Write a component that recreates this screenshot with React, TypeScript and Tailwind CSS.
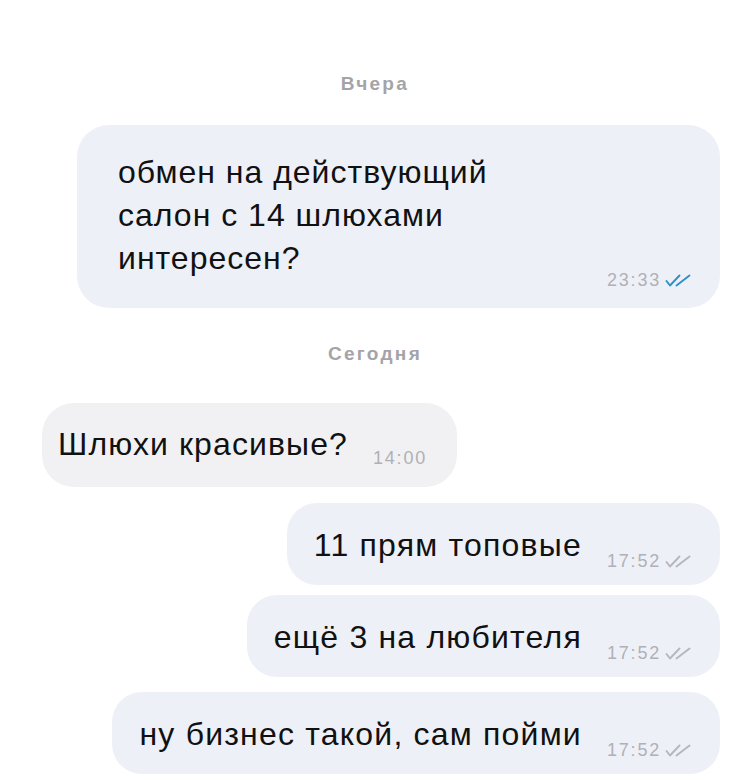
import React from "react";

type Msg = { text: string; time: string; read?: boolean; gap: string };

const font = { fontFamily: '"Liberation Sans", Arial, sans-serif' };

function Ticks({ read }: { read?: boolean }) {
  const color = read ? "#2f8fc9" : "#b6b6be";
  return (
    <svg width="27" height="13" viewBox="0 0 27 13" fill="none" className="ml-[4px]">
      <path d="M1.5 7 L5 11.5 L14.5 1.5" stroke={color} strokeWidth="1.9" strokeLinecap="round" strokeLinejoin="round" />
      <path d="M11.5 11.5 L24.5 1.5" stroke={color} strokeWidth="1.9" strokeLinecap="round" />
    </svg>
  );
}

function DayLabel({ children }: { children: React.ReactNode }) {
  return (
    <div className="text-center text-[19px] leading-none font-bold text-[#a4a4a8] tracking-[2.3px]">
      {children}
    </div>
  );
}

function Time({ time, out, read }: { time: string; out?: boolean; read?: boolean }) {
  return (
    <div className="flex items-center shrink-0 text-[18px] leading-[20px] tracking-[1.8px] text-[#b0b0b6]">
      <span>{time}</span>
      {out && <Ticks read={read} />}
    </div>
  );
}

function OutBubble({ text, time, read, gap }: Msg) {
  return (
    <div className={`self-end mr-[30px] ${gap} flex items-end rounded-[30px] bg-[#eef0f8] h-[82px] pl-[27px] pr-[28px] pb-[14px]`}>
      <span className="text-[32px] leading-none tracking-[1.2px] text-[#111] mb-[10px]">{text}</span>
      <div className="ml-[25px]">
        <Time time={time} out read={read} />
      </div>
    </div>
  );
}

export default function App() {
  const outgoing: Msg[] = [
    { text: "11 прям топовые", time: "17:52", gap: "mt-[16px]" },
    { text: "ещё 3 на любителя", time: "17:52", gap: "mt-[10px]" },
    { text: "ну бизнес такой, сам пойми", time: "17:52", gap: "mt-[15px]" },
  ];

  return (
    <div className="w-[750px] h-[778px] bg-white overflow-hidden flex flex-col" style={font}>
      <div className="pt-[74px]">
        <DayLabel>Вчера</DayLabel>
      </div>

      <div className="ml-[77px] mr-[30px] mt-[32px] rounded-[32px] bg-[#eef0f8] h-[183px] flex items-end justify-between pl-[41px] pr-[28px] pb-[18px]">
        <div className="text-[32px] leading-[43px] tracking-[1px] text-[#111] mb-[10px]">
          обмен на действующий
          <br />
          салон с 14 шлюхами
          <br />
          интересен?
        </div>
        <Time time="23:33" out read />
      </div>

      <div className="mt-[36px]">
        <DayLabel>Сегодня</DayLabel>
      </div>

      <div className="self-start ml-[42px] mt-[40px] h-[84px] flex items-end rounded-[32px] bg-[#f1f1f3] pl-[16px] pr-[30px] pb-[19px]">
        <span className="text-[32px] leading-none tracking-[1.1px] text-[#111] mb-[8px]">Шлюхи красивые?</span>
        <div className="ml-[25px]">
          <Time time="14:00" />
        </div>
      </div>

      {outgoing.map((m, i) => (
        <OutBubble key={i} {...m} />
      ))}
    </div>
  );
}
